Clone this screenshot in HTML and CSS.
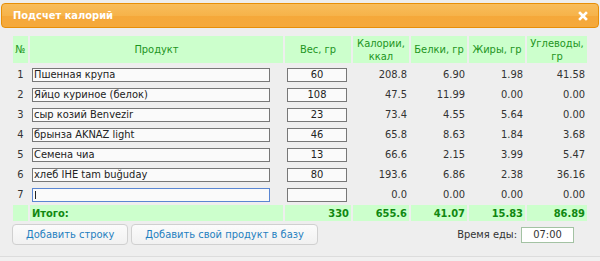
FILE: index.html
```html
<!DOCTYPE html>
<html lang="ru">
<head>
    <meta charset="UTF-8">
    <title>Подсчет калорий</title>
    <link rel="stylesheet" href="styles.css">
</head>
<body>
    <div class="dialog">
        <div class="titlebar">
            <span class="title">Подсчет калорий</span>
            <span class="close">
                <svg width="10" height="10" viewBox="0 0 10 10">
                    <path d="M2 2 L8 8 M8 2 L2 8" stroke="#fff" stroke-width="2.6" stroke-linecap="square" fill="none"/>
                </svg>
            </span>
        </div>

        <div class="content">
            <table class="calc">
                <colgroup>
                    <col class="c-idx"><col class="c-name"><col class="c-weight">
                    <col class="c-num"><col class="c-num"><col class="c-num"><col class="c-last">
                </colgroup>
                <thead>
                    <tr>
                        <th>№</th>
                        <th>Продукт</th>
                        <th>Вес, гр</th>
                        <th>Калории,<br>ккал</th>
                        <th>Белки, гр</th>
                        <th>Жиры, гр</th>
                        <th>Углеводы,<br>гр</th>
                    </tr>
                </thead>
                <tbody>
                    <tr>
                        <td class="idx">1</td>
                        <td class="name"><input type="text" value="Пшенная крупа"></td>
                        <td class="weight"><input type="text" value="60"></td>
                        <td class="num">208.8</td><td class="num">6.90</td><td class="num">1.98</td><td class="num">41.58</td>
                    </tr>
                    <tr>
                        <td class="idx">2</td>
                        <td class="name"><input type="text" value="Яйцо куриное (белок)"></td>
                        <td class="weight"><input type="text" value="108"></td>
                        <td class="num">47.5</td><td class="num">11.99</td><td class="num">0.00</td><td class="num">0.00</td>
                    </tr>
                    <tr>
                        <td class="idx">3</td>
                        <td class="name"><input type="text" value="сыр козий Benvezir"></td>
                        <td class="weight"><input type="text" value="23"></td>
                        <td class="num">73.4</td><td class="num">4.55</td><td class="num">5.64</td><td class="num">0.00</td>
                    </tr>
                    <tr>
                        <td class="idx">4</td>
                        <td class="name"><input type="text" value="брынза AKNAZ light"></td>
                        <td class="weight"><input type="text" value="46"></td>
                        <td class="num">65.8</td><td class="num">8.63</td><td class="num">1.84</td><td class="num">3.68</td>
                    </tr>
                    <tr>
                        <td class="idx">5</td>
                        <td class="name"><input type="text" value="Семена чиа"></td>
                        <td class="weight"><input type="text" value="13"></td>
                        <td class="num">66.6</td><td class="num">2.15</td><td class="num">3.99</td><td class="num">5.47</td>
                    </tr>
                    <tr>
                        <td class="idx">6</td>
                        <td class="name"><input type="text" value="хлеб IHE tam buğuday"></td>
                        <td class="weight"><input type="text" value="80"></td>
                        <td class="num">193.6</td><td class="num">6.86</td><td class="num">2.38</td><td class="num">36.16</td>
                    </tr>
                    <tr>
                        <td class="idx">7</td>
                        <td class="name"><input type="text" class="active" value=""></td>
                        <td class="weight"><input type="text" value=""></td>
                        <td class="num">0.0</td><td class="num">0.00</td><td class="num">0.00</td><td class="num">0.00</td>
                    </tr>
                    <tr class="total">
                        <td></td>
                        <td class="label">Итого:</td>
                        <td class="num">330</td>
                        <td class="num">655.6</td><td class="num">41.07</td><td class="num">15.83</td><td class="num">86.89</td>
                    </tr>
                </tbody>
            </table>

            <div class="actions">
                <button type="button">Добавить строку</button>
                <button type="button">Добавить свой продукт в базу</button>
                <label class="meal-time">Время еды: <input type="text" value="07:00"></label>
            </div>
        </div>

        <div class="pane"></div>
    </div>
</body>
</html>
```

FILE: styles.css
```css
body {
  margin: 0;
  background: #f7f7f7;
  font-family: "DejaVu Sans Condensed", "DejaVu Sans", sans-serif;
  font-size: 11px;
  color: #333;
}

.dialog {
  width: 600px;
  height: 261px;
  box-sizing: border-box;
  padding: 3px 1px 0 1px;
  background: #eee;
  display: flex;
  flex-direction: column;
}

.titlebar {
  height: 25px;
  box-sizing: border-box;
  border: 1px solid #e78f08;
  border-radius: 4px;
  background: linear-gradient(#f8bd5c, #f6b34a 50%, #f5a83a 52%, #f5a93b);
  color: #fff;
  font-weight: bold;
  display: flex;
  align-items: center;
  justify-content: space-between;
  padding: 0 10px 0 11px;
}

.close svg {
  display: block;
}

.content {
  flex: 1;
  padding: 6px 10px 0 10px;
}

.calc {
  border-collapse: separate;
  border-spacing: 2px;
  table-layout: fixed;
  width: 578px;
}

.c-idx { width: 15px; }
.c-name { width: 253px; }
.c-weight { width: 66px; }
.c-num { width: 56px; }
.c-last { width: 60px; }

.calc th {
  height: 27px;
  padding: 0;
  background: #ccffcc;
  color: #1e951e;
  font-weight: normal;
  line-height: 13px;
  text-align: center;
}

.calc td {
  height: 18px;
  padding: 0;
  vertical-align: middle;
}

.calc td.idx {
  text-align: center;
}

.calc td.num {
  text-align: right;
  padding-right: 2px;
}

.calc td.name,
.calc td.weight {
  padding-left: 2px;
}

.calc input {
  display: block;
  box-sizing: border-box;
  height: 14px;
  margin-top: 1px;
  padding: 0 1px;
  border: 1px solid #777;
  background: #fafafa;
  font: inherit;
  color: #222;
  line-height: 12px;
}

.calc td.name input {
  width: 238px;
}

.calc td.weight input {
  width: 60px;
  text-align: center;
}

.calc input.active {
  border-color: #5a86d2;
  background: linear-gradient(#222, #222) 2px 2px / 1px 8px no-repeat, #fafafa;
}

.calc tr.total td {
  height: 16px;
  background: #ccffcc;
  color: #118811;
  font-weight: bold;
}

.calc tr.total td.label {
  padding-left: 2px;
}

.actions {
  display: flex;
  align-items: center;
  margin-top: 1px;
  padding-left: 1px;
}

.actions button {
  height: 21px;
  margin-right: 3px;
  padding: 0 13px;
  border: 1px solid #d0d0d0;
  border-radius: 4px;
  background: linear-gradient(#fbfbfb, #f1f1f1);
  color: #1f7fbf;
  font: inherit;
}

.meal-time {
  margin-left: auto;
  margin-right: 15px;
  display: flex;
  align-items: center;
  gap: 4px;
}

.meal-time input {
  width: 53px;
  height: 16px;
  box-sizing: border-box;
  border: 1px solid #a3c2a3;
  background: #fff;
  font: inherit;
  color: #333;
  text-align: center;
  padding: 0;
}

.pane {
  height: 4px;
  border-top: 1px solid #dcdcdc;
  background: #f0f0f0;
  margin: 0 -1px;
}
```
